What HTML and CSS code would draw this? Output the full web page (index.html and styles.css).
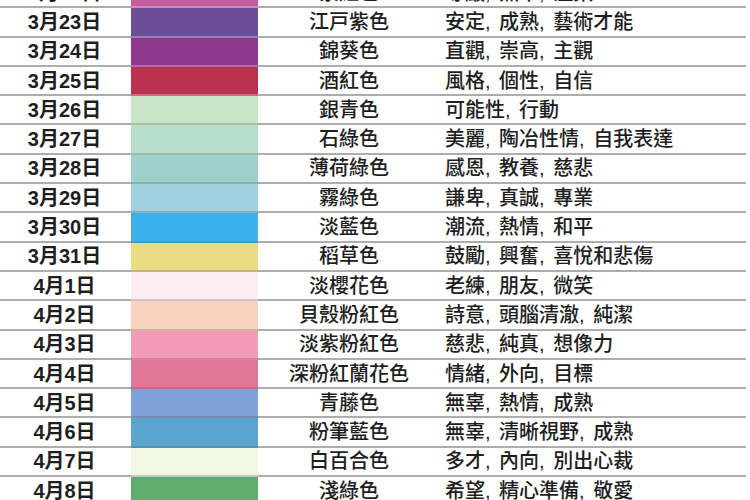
FILE: index.html
```html
<!DOCTYPE html>
<html lang="zh-Hant">
<head>
<meta charset="utf-8">
<title>誕生色</title>
<link rel="stylesheet" href="styles.css">
</head>
<body>
<div class="table">
  <div class="row"><div class="date">3月22日</div><div class="sw dark" style="background:#c45e9c"></div><div class="name">紫紅色</div><div class="traits">尊嚴, 熱中, 溫柔</div></div>
  <div class="row"><div class="date">3月23日</div><div class="sw dark" style="background:#6c4e98"></div><div class="name">江戸紫色</div><div class="traits">安定, 成熟, 藝術才能</div></div>
  <div class="row"><div class="date">3月24日</div><div class="sw dark" style="background:#8e388e"></div><div class="name">錦葵色</div><div class="traits">直觀, 崇高, 主觀</div></div>
  <div class="row"><div class="date">3月25日</div><div class="sw dark" style="background:#bb3150"></div><div class="name">酒紅色</div><div class="traits">風格, 個性, 自信</div></div>
  <div class="row"><div class="date">3月26日</div><div class="sw" style="background:#cae4c8"></div><div class="name">銀青色</div><div class="traits">可能性, 行動</div></div>
  <div class="row"><div class="date">3月27日</div><div class="sw" style="background:#b6deca"></div><div class="name">石綠色</div><div class="traits">美麗, 陶冶性情, 自我表達</div></div>
  <div class="row"><div class="date">3月28日</div><div class="sw" style="background:#a0d0cc"></div><div class="name">薄荷綠色</div><div class="traits">感恩, 教養, 慈悲</div></div>
  <div class="row"><div class="date">3月29日</div><div class="sw" style="background:#9fd0e0"></div><div class="name">霧綠色</div><div class="traits">謙卑, 真誠, 專業</div></div>
  <div class="row"><div class="date">3月30日</div><div class="sw" style="background:#3db2ea"></div><div class="name">淡藍色</div><div class="traits">潮流, 熱情, 和平</div></div>
  <div class="row"><div class="date">3月31日</div><div class="sw" style="background:#eadb85"></div><div class="name">稻草色</div><div class="traits">鼓勵, 興奮, 喜悅和悲傷</div></div>
  <div class="row"><div class="date">4月1日</div><div class="sw" style="background:#fdedf3"></div><div class="name">淡櫻花色</div><div class="traits">老練, 朋友, 微笑</div></div>
  <div class="row"><div class="date">4月2日</div><div class="sw" style="background:#f9d3bd"></div><div class="name">貝殼粉紅色</div><div class="traits">詩意, 頭腦清澈, 純潔</div></div>
  <div class="row"><div class="date">4月3日</div><div class="sw" style="background:#f39bb9"></div><div class="name">淡紫粉紅色</div><div class="traits">慈悲, 純真, 想像力</div></div>
  <div class="row"><div class="date">4月4日</div><div class="sw" style="background:#e27898"></div><div class="name">深粉紅蘭花色</div><div class="traits">情緒, 外向, 目標</div></div>
  <div class="row"><div class="date">4月5日</div><div class="sw" style="background:#80a0d8"></div><div class="name">青藤色</div><div class="traits">無辜, 熱情, 成熟</div></div>
  <div class="row"><div class="date">4月6日</div><div class="sw" style="background:#5aa4cf"></div><div class="name">粉筆藍色</div><div class="traits">無辜, 清晰視野, 成熟</div></div>
  <div class="row"><div class="date">4月7日</div><div class="sw" style="background:#f1f7e3"></div><div class="name">白百合色</div><div class="traits">多才, 內向, 別出心裁</div></div>
  <div class="row"><div class="date">4月8日</div><div class="sw" style="background:#5fae70"></div><div class="name">淺綠色</div><div class="traits">希望, 精心準備, 敬愛</div></div>
</div>
</body>
</html>
```

FILE: styles.css
```css
html, body {
  margin: 0;
  padding: 0;
  background: #ffffff;
  overflow: hidden;
}

body {
  width: 750px;
  height: 500px;
  font-family: "Liberation Sans", "Noto Sans CJK TC", "Noto Sans CJK JP", sans-serif;
  color: #1e1e1e;
}

.table {
  width: 746px;
  margin-top: -21px;
}

.row {
  display: grid;
  grid-template-columns: 131px 127px 182px 306px;
  height: 29.3px;
}

.row > div {
  box-sizing: border-box;
  border-bottom: 2px solid #adadad;
  display: flex;
  align-items: center;
  font-size: 20px;
  line-height: 1;
  white-space: nowrap;
}

.date {
  justify-content: center;
  font-weight: bold;
  padding-right: 2px;
}

.name {
  justify-content: center;
  font-weight: 500;
}

.traits {
  padding-left: 5px;
  font-weight: 500;
  word-spacing: 3px;
}

.row > .sw {
  border-bottom: 2px solid rgba(90, 90, 90, 0.28);
}

.row > .sw.dark {
  border-bottom: 2px solid rgba(255, 255, 255, 0.28);
}
```
